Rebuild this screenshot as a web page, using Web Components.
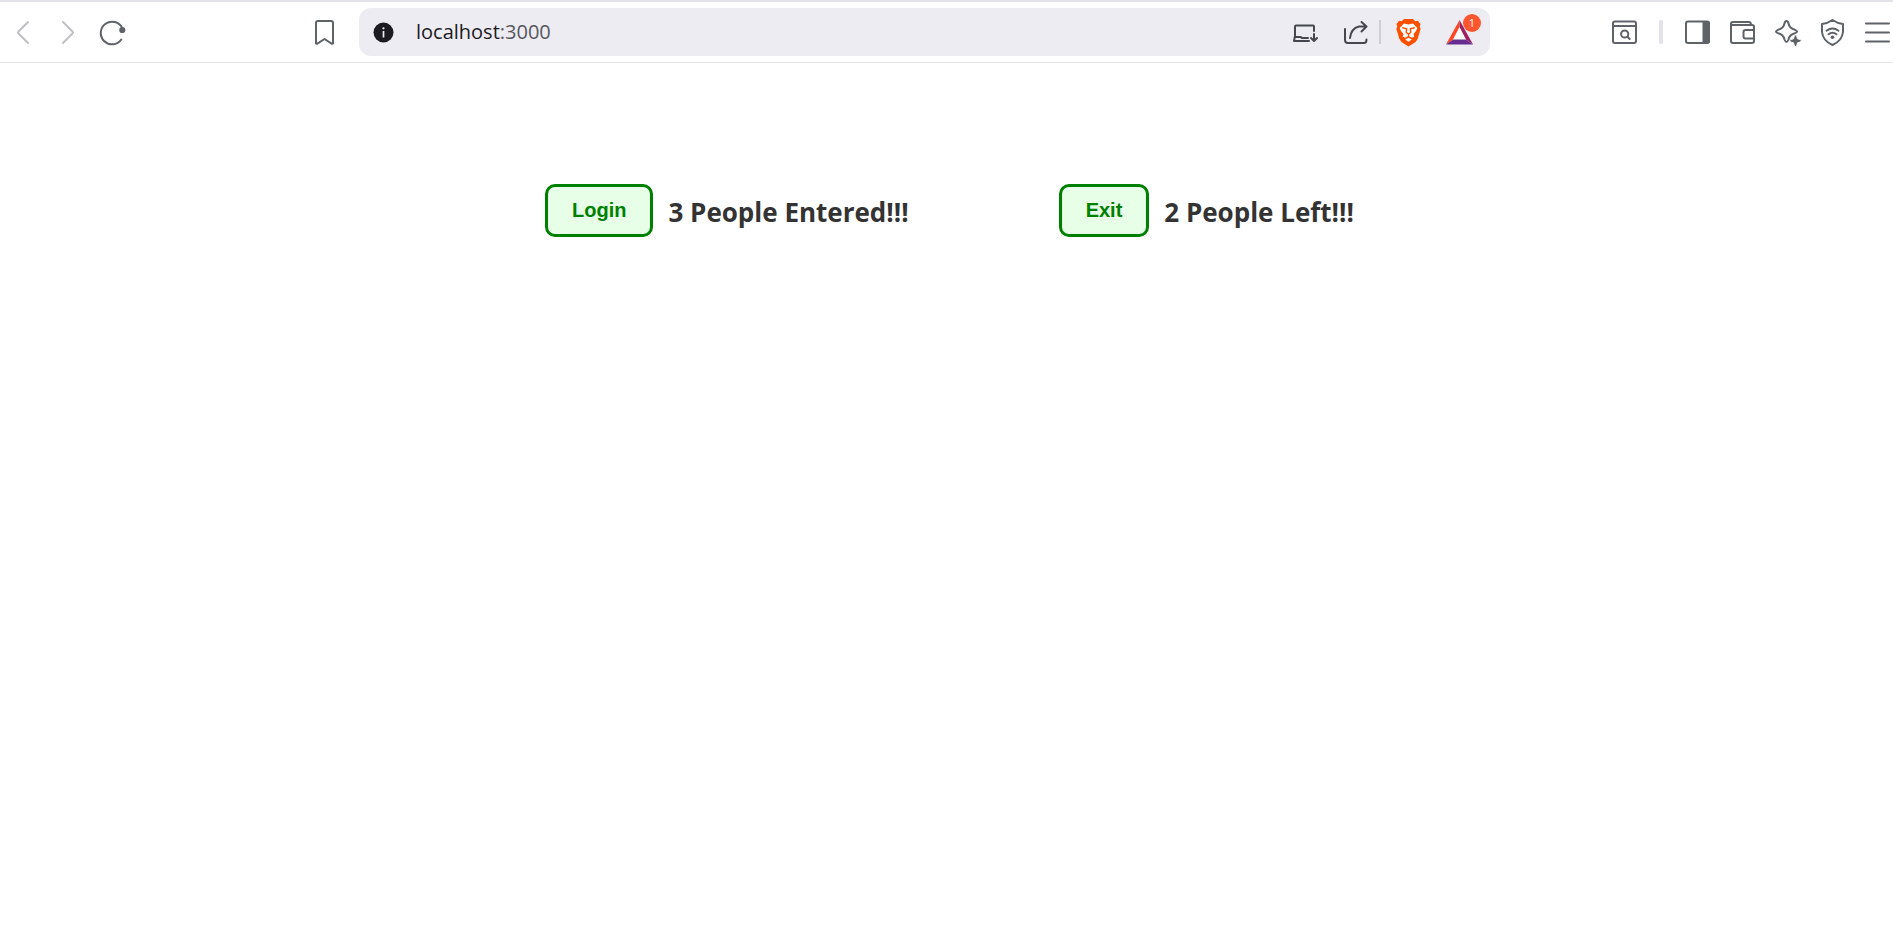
<!DOCTYPE html>
<html lang="en">
<head>
<meta charset="utf-8">
<meta name="viewport" content="width=device-width, initial-scale=1">
<title>localhost:3000</title>
<style>
  body { margin: 0; background: #fff; font-family: "Open Sans", "Noto Sans", sans-serif; color: #333; }
</style>
</head>
<body>
<browser-toolbar></browser-toolbar>
<people-counters>
  <people-counter label="Login">3 People Entered!!!</people-counter>
  <people-counter label="Exit">2 People Left!!!</people-counter>
</people-counters>

<script>
const S = 'fill="none" stroke="currentColor" stroke-width="2" stroke-linecap="round" stroke-linejoin="round"';
const ICONS = {
  back: `<path ${S} d="M18 2 8.300 11.800q-.7.7 0 1.400L18 23"/>`,
  forward: `<path ${S} d="M8 2 17.700 11.800q.7.7 0 1.400L8 23"/>`,
  reload: `<path ${S} d="M21.300 19.500A11.300 11.300 0 1 1 22.300 8.200"/><circle cx="22.300" cy="10" r="3.100" fill="currentColor"/>`,
  bookmark: `<path ${S} d="M6 1h13q2 0 2 2v20.500l-1 .3-7.500-4.800L5 23.800l-1-.3V3q0-2 2-2Z"/>`,
  info: `<circle cx="12.500" cy="12.500" r="10" fill="currentColor"/><path d="M12.500 11v6.500" stroke="#edecf2" stroke-width="1.700"/><circle cx="12.500" cy="8.300" r="1.100" fill="#edecf2"/>`,
  install: `<path ${S} d="M2 16V6.500q0-1 1-1h17q1 0 1 1V11M2 16 1 21h15M2 17h5q1 0 2 1h6M21 14v6.500m-3-2.500 3 3 3-3"/>`,
  share: `<path ${S} d="M1 9v11q0 3 3 3h16q2.500 0 2.500-3.500M6 18q1-9.500 9-11.500h7M17.500 2l5 4.500-5 5"/>`,
  brave: `<path fill="#ff5000" d="M8 -1h9l2.300 2.200 2.500-.4 2.700 3.300-.7 2.400.8 2.600-3 10-2 2.800-7.100 4.600-7.100-4.600-2-2.800-3-10 .8-2.600L.5 4.100l2.700-3.300 2.500.4Z"/><path fill="#fff" d="m8 3.500 4.500.9 4.500-.9 4.300 4.500-1.300 3-2.500 3.100.8 2.300-2.300 1.400-3.500-1.800-3.500 1.800-2.300-1.400.8-2.300L5 11 3.700 8Zm1.200 16 3.300-1.700 3.300 1.700-3.300 2.200Z"/><path fill="none" stroke="#ff5000" stroke-width="1.400" d="m6.300 7.800 4.400 1-.5 3.500 2.300 2 2.300-2-.5-3.500 4.400-1M12.500 14.300v2.400"/>`,
  bat: `<path fill="#ff4724" d="M12.500 0v8L7 19 -1 24.500Z"/><path fill="#9e1f63" d="M12.500 0v8L18 19l8 5.500Z"/><path fill="#662d91" d="m-1 24.500 8-5.500h11l8 5.500Z"/><path fill="#fff" d="m12.500 7 6.500 12.500H6Z"/>`,
  search: `<rect ${S} x="1" y="1.500" width="23" height="21.500" rx="2"/><path ${S} d="M1 6h23"/><circle ${S} cx="12.700" cy="14" r="3.600"/><path ${S} d="m15.500 16.800 2.200 2.200"/>`,
  sidebar: `<rect ${S} x="1" y="1.500" width="23" height="21.500" rx="2"/><path fill="currentColor" d="M17.500 1H23q2 0 2 2v18.500q0 2-2 2h-5.500Z"/>`,
  wallet: `<path ${S} d="M1 5v16q0 2 2 2h19q2 0 2-2V7q0-2-2-2H1V4q0-2 2-2h16q2 0 2 3M24 10h-8.500q-2 0-2 2v4.500q0 2 2 2H24M24 10v8.500"/>`,
  spark: `<path ${S} d="M11.500 1q-1.500 0-2 2.500Q8.500 8.500 3 9.800q-4 1.700 0 3.400Q8.500 14.500 9.500 19.500q2 5 4 0Q14.500 14.500 20 13.200q4-1.700 0-3.400Q14.500 8.500 13.500 3.500 13 1 11.500 1Z"/><path fill="currentColor" stroke="#fff" stroke-width="1" d="M20.500 15q1.500 0 2 3.800 3.800.5 3.800 2t-3.800 2q-.5 3.800-2 3.800t-2-3.800q-3.800-.5-3.800-2t3.800-2q.5-3.800 2-3.800Z"/>`,
  shield: `<path ${S} d="M12.500 0q5 3.500 10.500 4v8Q22 21 12.500 25 3 21 2 12V4Q7.500 3.500 12.500 0ZM6.500 10.700q6-4.500 12 0M8.500 14.200q4-3 8 0"/><circle cx="12.500" cy="17.300" r="1.800" fill="currentColor"/>`,
  menu: `<path ${S} d="M1 3.500h23M1 12.500h23M1 21.500h23"/>`
};

class ToolIcon extends HTMLElement {
  connectedCallback() {
    this.attachShadow({ mode: 'open' }).innerHTML = `
      <style>
        :host { display: block; width: 25px; height: 25px; flex: none; }
        button { display: block; width: 100%; height: 100%; padding: 0; border: 0; background: none; color: inherit; }
        svg { display: block; width: 100%; height: 100%; overflow: visible; }
      </style>
      <button type="button" aria-label="${this.getAttribute('label')}">
        <svg viewBox="0 0 25 25" aria-hidden="true">${ICONS[this.getAttribute('name')]}</svg>
      </button>`;
  }
}
customElements.define('tool-icon', ToolIcon);

class AddressBar extends HTMLElement {
  connectedCallback() {
    this.attachShadow({ mode: 'open' }).innerHTML = `
      <style>
        :host { display: flex; align-items: center; height: 48px; padding: 0 18px 0 12px; box-sizing: border-box;
          border-radius: 12px; background: #edecf2; color: #46464f; min-width: 0; }
        .site { color: #1c1b22; }
        .url { flex: 1; margin-left: 20px; font-size: 20px; line-height: 28px; color: #56565e; }
        .url b { font-weight: 400; color: #1c1b22; }
        .actions { display: flex; align-items: center; gap: 26px; }
        .sep { width: 2px; height: 24px; background: #cfced5; margin: 0 -11px 0 -16px; }
        .rewards { position: relative; }
        .badge { position: absolute; left: 16px; top: -6px; width: 18px; height: 18px; border-radius: 9px;
          background: #ff5630; color: #fff; font: 11px/18px "Open Sans", sans-serif; text-align: center; }
      </style>
      <tool-icon class="site" name="info" label="Site information"></tool-icon>
      <div class="url"><b>localhost</b>:3000</div>
      <div class="actions">
        <tool-icon name="install" label="Install app"></tool-icon>
        <tool-icon name="share" label="Share"></tool-icon>
        <span class="sep"></span>
        <tool-icon name="brave" label="Shields"></tool-icon>
        <div class="rewards"><tool-icon name="bat" label="Rewards"></tool-icon><span class="badge">1</span></div>
      </div>`;
  }
}
customElements.define('address-bar', AddressBar);

class BrowserToolbar extends HTMLElement {
  connectedCallback() {
    this.attachShadow({ mode: 'open' }).innerHTML = `
      <style>
        :host { display: block; }
        header { display: grid; grid-template-columns: 347px minmax(0, 1fr) 391px; gap: 12px; align-items: center;
          height: 60px; border-top: 2px solid #e3e2e8; border-bottom: 1px solid #e3e3e7; color: #5f6368; background: #fff; }
        nav { display: flex; align-items: center; gap: 20px; padding: 0 10px; }
        nav .off { color: #bfc0c3; }
        nav .mark { margin-left: auto; }
        .tools { display: flex; align-items: center; justify-content: flex-end; gap: 20px; padding-right: 3px; }
        .sep { width: 4px; height: 24px; border-radius: 2px; background: #e3e2e8; margin: 0 2px; }
      </style>
      <header>
        <nav>
          <tool-icon class="off" name="back" label="Back"></tool-icon>
          <tool-icon class="off" name="forward" label="Forward"></tool-icon>
          <tool-icon name="reload" label="Reload"></tool-icon>
          <tool-icon class="mark" name="bookmark" label="Bookmark"></tool-icon>
        </nav>
        <address-bar></address-bar>
        <div class="tools">
          <tool-icon name="search" label="Search tabs"></tool-icon>
          <span class="sep"></span>
          <tool-icon name="sidebar" label="Sidebar"></tool-icon>
          <tool-icon name="wallet" label="Wallet"></tool-icon>
          <tool-icon name="spark" label="Assistant"></tool-icon>
          <tool-icon name="shield" label="VPN"></tool-icon>
          <tool-icon name="menu" label="Menu"></tool-icon>
        </div>
      </header>`;
  }
}
customElements.define('browser-toolbar', BrowserToolbar);

class PeopleCounter extends HTMLElement {
  connectedCallback() {
    this.attachShadow({ mode: 'open' }).innerHTML = `
      <style>
        :host { display: flex; align-items: center; gap: 15px; }
        button { height: 53px; padding: 0 24px 2px; border: 3px solid #008000; border-radius: 10px; background: #e6ffe6;
          color: #008000; font: bold 20px/24px "Liberation Sans", Arial, sans-serif; }
        p { margin: 0; padding-top: 2px; font-size: 26px; line-height: 36px; font-weight: 700; white-space: nowrap; }
      </style>
      <button type="button">${this.getAttribute('label')}</button>
      <p><slot></slot></p>`;
  }
}
customElements.define('people-counter', PeopleCounter);

class PeopleCounters extends HTMLElement {
  connectedCallback() {
    this.attachShadow({ mode: 'open' }).innerHTML = `
      <style>
        :host { display: flex; justify-content: center; gap: 150px; padding: 121px 0 0 6px; }
      </style>
      <slot></slot>`;
  }
}
customElements.define('people-counters', PeopleCounters);
</script>
</body>
</html>
